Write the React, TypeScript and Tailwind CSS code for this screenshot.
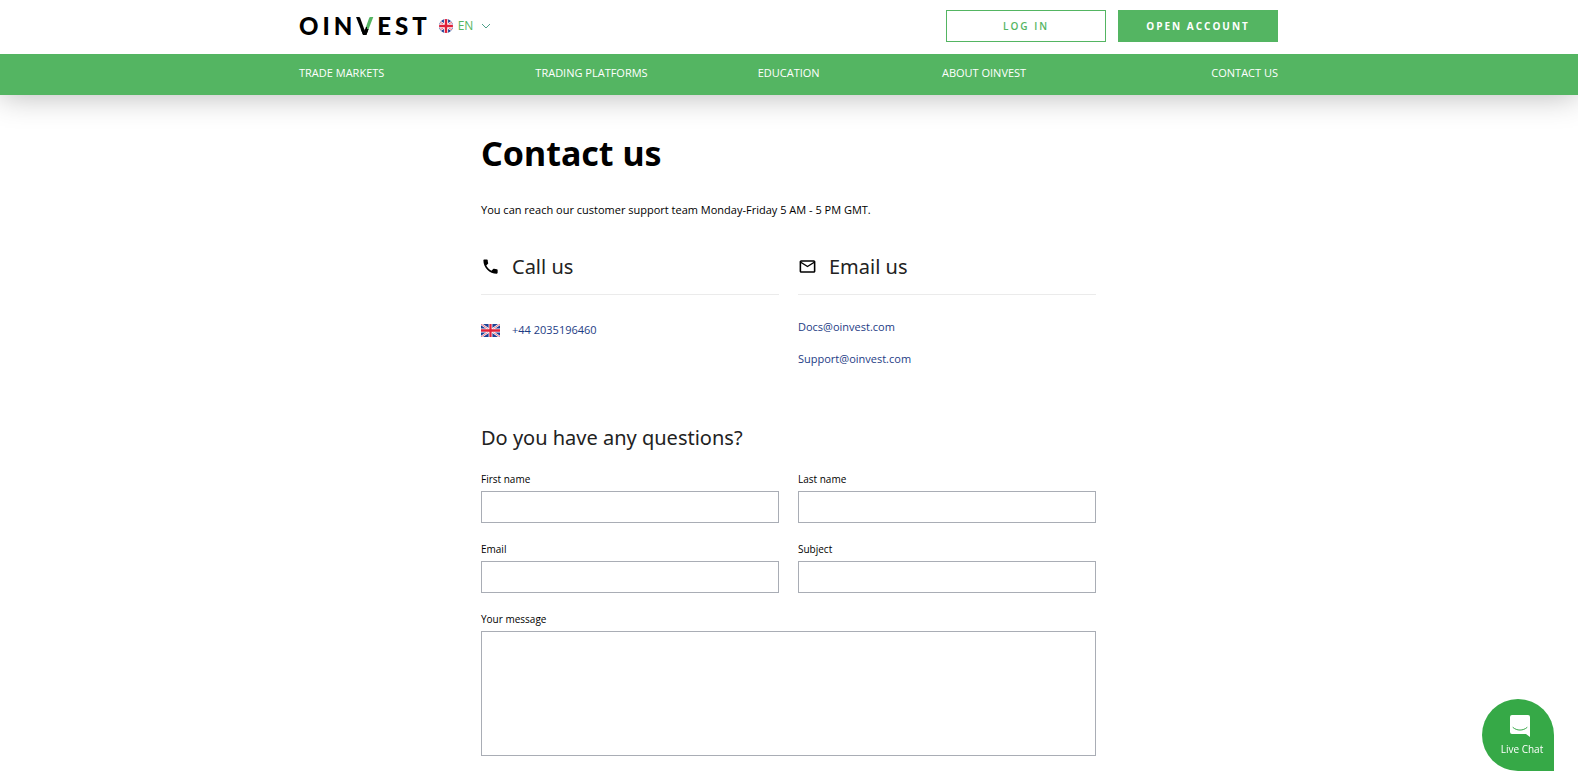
import { MdOutlineEmail, MdPhone } from 'react-icons/md'

const NAV_LINKS = ['Trade markets', 'Trading platforms', 'Education', 'About Oinvest', 'Contact us']

const EMAILS = ['Docs@oinvest.com', 'Support@oinvest.com']

const FIELDS = [
  { id: 'first-name', label: 'First name', type: 'text' },
  { id: 'last-name', label: 'Last name', type: 'text' },
  { id: 'email', label: 'Email', type: 'email' },
  { id: 'subject', label: 'Subject', type: 'text' },
]

function UnionJack({ className, fit = 'none' }: { className: string; fit?: string }) {
  return (
    <svg viewBox="0 0 60 40" preserveAspectRatio={fit} className={className} aria-hidden="true">
      <path fill="#1f3f94" d="M0 0h60v40H0z" />
      <path stroke="#fff" strokeWidth="7" d="M0 0l60 40M60 0L0 40" />
      <path stroke="#e0203a" strokeWidth="2" d="M0 0l60 40M60 0L0 40" />
      <path stroke="#fff" strokeWidth="12" d="M30 0v40M0 20h60" />
      <path stroke="#e0203a" strokeWidth="7" d="M30 0v40M0 20h60" />
    </svg>
  )
}

function Logo() {
  return (
    <a href="#home" aria-label="Oinvest" className="font-['Lato',sans-serif] text-2xl font-black leading-8 tracking-[4px] text-black">
      OIN
      {/* Black V with a green tip on the right arm */}
      <span className="bg-[linear-gradient(0deg,#000_38%,transparent_38%),linear-gradient(72deg,#000_48%,#54b562_48%)] bg-clip-text text-transparent">
        V
      </span>
      EST
    </a>
  )
}

function Header() {
  return (
    <header className="shadow-[0_0_30px_rgba(0,0,0,0.3)]">
      <div className="mx-auto flex max-w-[980px] items-center pt-[10px] pr-px pb-3">
        <Logo />
        <button type="button" className="ml-2 flex items-center text-xs text-[#54b562]">
          <UnionJack className="h-[14px] w-[14px] rounded-full" fit="xMidYMid slice" />
          <span className="ml-[5px]">EN</span>
          <svg viewBox="0 0 10 6" className="ml-2 h-[6px] w-[10px]" fill="none" stroke="#4fa08a" aria-hidden="true">
            <path d="M1 1l4 4 4-4" />
          </svg>
        </button>
        <div className="ml-auto flex gap-3 text-[10px] tracking-[2px]">
          <a href="#login" className="flex h-8 w-40 items-center justify-center border border-[#54b562] font-semibold text-[#54b562]">
            LOG IN
          </a>
          <a href="#open" className="flex h-8 w-40 items-center justify-center bg-[#54b562] font-bold text-white">
            OPEN ACCOUNT
          </a>
        </div>
      </div>
      <nav className="bg-[#54b562]">
        <div className="mx-auto grid h-[41px] max-w-[980px] grid-cols-[236fr_222fr_184fr_269fr_auto] pt-[10px] pr-px text-[11px] leading-[18px] font-medium text-white uppercase">
          {NAV_LINKS.map((link) => (
            <a key={link} href="#nav">
              {link}
            </a>
          ))}
        </div>
      </nav>
    </header>
  )
}

function ContactDetails() {
  return (
    <div className="mt-5 grid grid-cols-2 gap-[19px]">
      <section>
        <h2 className="flex h-14 items-center gap-3 border-b border-[#ebebeb] font-['Noto_Sans',sans-serif] text-xl text-[#222]">
          <MdPhone className="size-[19px] text-black" />
          Call us
        </h2>
        <a href="tel:+442035196460" className="mt-[26px] flex items-center gap-3 leading-[18px] text-[#1d3c85]">
          <UnionJack className="h-[13px] w-[19px]" />
          +44 2035196460
        </a>
      </section>
      <section>
        <h2 className="flex h-14 items-center gap-3 border-b border-[#ebebeb] font-['Noto_Sans',sans-serif] text-xl text-[#222]">
          <MdOutlineEmail className="size-[19px] text-black" />
          Email us
        </h2>
        <div className="mt-[23px] flex flex-col items-start gap-[14px] leading-[18px] text-[#1d3c85]">
          {EMAILS.map((email) => (
            <a key={email} href={`mailto:${email}`}>
              {email}
            </a>
          ))}
        </div>
      </section>
    </div>
  )
}

function ContactForm() {
  return (
    <form className="mt-14">
      <h2 className="font-['Noto_Sans',sans-serif] text-xl leading-7 text-[#222]">Do you have any questions?</h2>
      <div className="mt-[19px] grid grid-cols-2 gap-x-[19px] gap-y-[18px] text-[10px] leading-4">
        {FIELDS.map((field) => (
          <div key={field.id}>
            <label htmlFor={field.id} className="block">
              {field.label}
            </label>
            <input
              id={field.id}
              type={field.type}
              className="mt-1 block h-8 w-full border border-[#a9adb5] bg-white px-2 outline-none focus:border-[#54b562]"
            />
          </div>
        ))}
        <div className="col-span-2">
          <label htmlFor="message" className="block">
            Your message
          </label>
          <textarea
            id="message"
            className="mt-1 block h-[125px] w-full resize-none border border-[#a9adb5] bg-white p-2 outline-none focus:border-[#54b562]"
          />
        </div>
      </div>
    </form>
  )
}

function LiveChat() {
  return (
    <button
      type="button"
      className="fixed right-6 bottom-[6px] flex size-[72px] flex-col items-center rounded-full rounded-br-none bg-[#36a947] pt-4 pl-2 text-[10px] leading-4 font-medium text-white"
    >
      <svg viewBox="0 0 22 23" className="mr-1 mb-[3px] h-[23px] w-[22px]" aria-hidden="true">
        <path fill="#fff" d="M3 0h16a2 2 0 0 1 2 2v20l-4-3H3a2 2 0 0 1-2-2V2a2 2 0 0 1 2-2z" />
        <path fill="none" stroke="#36a947" strokeLinecap="round" d="M4 12.500c4 3.500 10 3.500 14 0" />
      </svg>
      Live Chat
    </button>
  )
}

export default function App() {
  return (
    <div className="bg-white font-['Open_Sans',sans-serif] text-[11px] text-black">
      <Header />
      <main className="mx-auto max-w-[616px] pt-[35px] pr-px pb-5">
        <h1 className="font-['Noto_Sans',sans-serif] text-[34px] leading-[46px] font-bold">Contact us</h1>
        <p className="mt-[25px] leading-[18px]">You can reach our customer support team Monday-Friday 5 AM - 5 PM GMT.</p>
        <ContactDetails />
        <ContactForm />
      </main>
      <LiveChat />
    </div>
  )
}
